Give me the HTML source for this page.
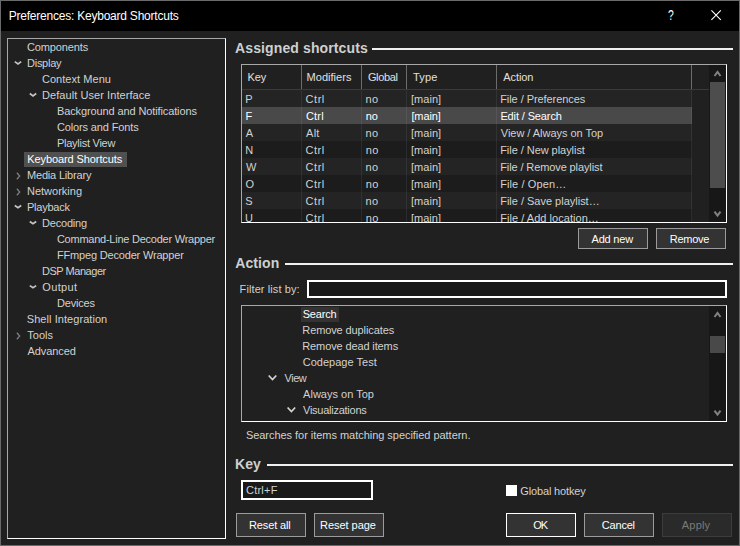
<!DOCTYPE html>
<html><head><meta charset="utf-8"><title>Preferences: Keyboard Shortcuts</title>
<style>
*{box-sizing:border-box;margin:0;padding:0}
html,body{width:740px;height:546px;overflow:hidden;background:#202020}
body{position:relative;font-family:"Liberation Sans",sans-serif;font-size:11px;color:#d6d6d6}
.abs{position:absolute}
.t{position:absolute;white-space:nowrap}
.box{position:absolute;border:1px solid;border-color:#a8a8a8 #fff #fff #a8a8a8}
.edit{position:absolute;border:2px solid #fff;background:#191919}
.hl{position:absolute;height:2px;background:#f0f0f0}
.btn{position:absolute;border:1px solid #9b9b9b;background:#333;color:#fff;text-align:center;white-space:nowrap}
</style></head><body>
<div class="abs" style="left:0;top:0;width:740px;height:546px;border:1px solid #6a6a6a"></div>
<div class="abs" style="left:1px;top:1px;width:738px;height:30px;background:#000"></div>
<svg class="abs" style="left:0;top:0" width="740" height="31"><path d="M711.4 10.4 L720.8 19.8 M720.8 10.4 L711.4 19.8" stroke="#fff" stroke-width="1.1" fill="none"/></svg>
<div class="t" style="left:668.3px;top:7px;line-height:16px;font-size:14px;color:#fff;transform:scaleX(.74);transform-origin:0 0">?</div>
<div class="box" style="left:7px;top:38px;width:219px;height:501px"></div>
<div class="hl" style="left:372px;top:48px;width:361px"></div>
<div class="hl" style="left:285px;top:263px;width:448px"></div>
<div class="hl" style="left:267px;top:464px;width:466px"></div>
<!-- shortcuts list -->
<div class="box" style="left:241px;top:64px;width:486px;height:159px"></div>
<div class="abs" id="lv" style="left:242px;top:65px;width:484px;height:157px;overflow:hidden">
 <div class="abs" style="left:0;top:24px;width:467px;height:1px;background:#3a3a3a"></div>
 <div class="abs" style="left:0;top:25px;width:450px;height:132px;background:#1c1c1c"></div>
 <div class="abs" style="left:0;top:25px;width:450px;height:17px;background:#242424"></div>
 <div class="abs" style="left:0;top:42px;width:450px;height:17px;background:#494949"></div>
 <div class="abs" style="left:0;top:59px;width:450px;height:17px;background:#242424"></div>
 <div class="abs" style="left:0;top:93px;width:450px;height:17px;background:#242424"></div>
 <div class="abs" style="left:0;top:127px;width:450px;height:17px;background:#242424"></div>
 <div class="abs" style="left:59px;top:25px;width:1px;height:132px;background:rgba(255,255,255,.07)"></div>
 <div class="abs" style="left:119px;top:25px;width:1px;height:132px;background:rgba(255,255,255,.07)"></div>
 <div class="abs" style="left:164px;top:25px;width:1px;height:132px;background:rgba(255,255,255,.07)"></div>
 <div class="abs" style="left:254px;top:25px;width:1px;height:132px;background:rgba(255,255,255,.07)"></div>
 <div class="abs" style="left:449px;top:25px;width:1px;height:132px;background:rgba(255,255,255,.07)"></div>
 <div class="abs" style="left:59px;top:0;width:1px;height:24px;background:#6c6c6c"></div>
 <div class="abs" style="left:119px;top:0;width:1px;height:24px;background:#6c6c6c"></div>
 <div class="abs" style="left:164px;top:0;width:1px;height:24px;background:#6c6c6c"></div>
 <div class="abs" style="left:254px;top:0;width:1px;height:24px;background:#6c6c6c"></div>
 <div class="abs" style="left:449px;top:0;width:1px;height:24px;background:#6c6c6c"></div>
 <div class="abs" style="left:467px;top:0;width:17px;height:157px;background:#171717"></div>
 <div class="abs" style="left:468px;top:17px;width:15px;height:106px;background:#4d4d4d"></div>
</div>
<!-- action tree -->
<div class="box" style="left:241px;top:305px;width:486px;height:117px"></div>
<div class="abs" style="left:709px;top:306px;width:17px;height:115px;background:#171717"></div>
<div class="abs" style="left:710px;top:336px;width:15px;height:17px;background:#494949"></div>
<div class="edit" style="left:307px;top:280px;width:420px;height:18px"></div>
<div class="edit" style="left:241px;top:480px;width:132px;height:20px"></div>
<div class="abs" style="left:506px;top:485px;width:11px;height:11px;background:#fff"></div>

<div class="abs" style="left:24px;top:152px;width:103px;height:15px;background:#505050;"></div>
<div class="abs" style="left:301px;top:307px;width:38px;height:15px;background:#333;"></div>
<svg class="abs" style="left:0;top:0" width="740" height="546"><path d="M14.8 61.6 L18.0 63.9 L21.2 61.6" fill="none" stroke="#c4c4c4" stroke-width="1.7"/><path d="M29.8 93.5 L33.0 95.9 L36.2 93.5" fill="none" stroke="#c4c4c4" stroke-width="1.7"/><path d="M16.9 172.8 L19.7 176.0 L16.9 179.2" fill="none" stroke="#7e7e7e" stroke-width="1.3"/><path d="M16.9 188.8 L19.7 192.0 L16.9 195.2" fill="none" stroke="#7e7e7e" stroke-width="1.3"/><path d="M14.8 205.5 L18.0 207.8 L21.2 205.5" fill="none" stroke="#c4c4c4" stroke-width="1.7"/><path d="M29.8 221.5 L33.0 223.8 L36.2 221.5" fill="none" stroke="#c4c4c4" stroke-width="1.7"/><path d="M29.8 285.6 L33.0 287.8 L36.2 285.6" fill="none" stroke="#c4c4c4" stroke-width="1.7"/><path d="M16.9 332.8 L19.7 336.0 L16.9 339.2" fill="none" stroke="#7e7e7e" stroke-width="1.3"/><path d="M268.7 375.5 L272.5 379.6 L276.3 375.5" fill="none" stroke="#d4d4d4" stroke-width="1.7"/><path d="M287.6 407.5 L291.4 411.6 L295.2 407.5" fill="none" stroke="#d4d4d4" stroke-width="1.7"/><path d="M714.5 76.0 L717.5 72.0 L720.5 76.0" fill="none" stroke="#828282" stroke-width="2.0"/><path d="M714.5 211.6 L717.5 215.6 L720.5 211.6" fill="none" stroke="#828282" stroke-width="2.0"/><path d="M714.5 317.0 L717.5 313.0 L720.5 317.0" fill="none" stroke="#828282" stroke-width="2.0"/><path d="M714.5 410.6 L717.5 414.6 L720.5 410.6" fill="none" stroke="#828282" stroke-width="2.0"/></svg>
<div class="btn" style="left:578px;top:228px;width:70px;height:21px;"></div>
<div class="btn" style="left:656px;top:228px;width:70px;height:21px;"></div>
<div class="btn" style="left:236px;top:513px;width:70px;height:24px;"></div>
<div class="btn" style="left:314px;top:513px;width:70px;height:24px;"></div>
<div class="btn" style="left:506px;top:513px;width:70px;height:24px;border-color:#fff;"></div>
<div class="btn" style="left:584px;top:513px;width:70px;height:24px;"></div>
<div class="btn" style="left:662px;top:513px;width:70px;height:24px;color:#7a7a7a;border-color:#3c3c3c;background:#2a2a2a;"></div>
<div class="t" style="left:8.7px;top:8px;line-height:16px;height:16px;color:#fff;letter-spacing:-0.222px;font-size:12px;">Preferences: Keyboard Shortcuts</div>
<div class="t" style="left:26.9px;top:39px;line-height:16px;height:16px;color:#d2d2d2;letter-spacing:-0.106px;">Components</div>
<div class="t" style="left:27.0px;top:55px;line-height:16px;height:16px;color:#d2d2d2;letter-spacing:-0.256px;">Display</div>
<div class="t" style="left:41.9px;top:71px;line-height:16px;height:16px;color:#d2d2d2;letter-spacing:0.054px;">Context Menu</div>
<div class="t" style="left:42.0px;top:87px;line-height:16px;height:16px;color:#d2d2d2;letter-spacing:0.068px;">Default User Interface</div>
<div class="t" style="left:57.0px;top:103px;line-height:16px;height:16px;color:#d2d2d2;letter-spacing:-0.118px;">Background and Notifications</div>
<div class="t" style="left:56.9px;top:119px;line-height:16px;height:16px;color:#d2d2d2;letter-spacing:-0.130px;">Colors and Fonts</div>
<div class="t" style="left:57.0px;top:135px;line-height:16px;height:16px;color:#d2d2d2;letter-spacing:-0.263px;">Playlist View</div>
<div class="t" style="left:27.3px;top:151px;line-height:16px;height:16px;color:#fff;letter-spacing:-0.100px;">Keyboard Shortcuts</div>
<div class="t" style="left:27.0px;top:167px;line-height:16px;height:16px;color:#d2d2d2;letter-spacing:-0.184px;">Media Library</div>
<div class="t" style="left:27.0px;top:183px;line-height:16px;height:16px;color:#d2d2d2;letter-spacing:0.001px;">Networking</div>
<div class="t" style="left:27.0px;top:199px;line-height:16px;height:16px;color:#d2d2d2;letter-spacing:-0.238px;">Playback</div>
<div class="t" style="left:42.0px;top:215px;line-height:16px;height:16px;color:#d2d2d2;letter-spacing:-0.196px;">Decoding</div>
<div class="t" style="left:56.9px;top:231px;line-height:16px;height:16px;color:#d2d2d2;letter-spacing:-0.241px;">Command-Line Decoder Wrapper</div>
<div class="t" style="left:57.0px;top:247px;line-height:16px;height:16px;color:#d2d2d2;letter-spacing:-0.181px;">FFmpeg Decoder Wrapper</div>
<div class="t" style="left:42.0px;top:263px;line-height:16px;height:16px;color:#d2d2d2;letter-spacing:-0.465px;">DSP Manager</div>
<div class="t" style="left:42.3px;top:279px;line-height:16px;height:16px;color:#d2d2d2;letter-spacing:0.342px;">Output</div>
<div class="t" style="left:57.0px;top:295px;line-height:16px;height:16px;color:#d2d2d2;letter-spacing:-0.181px;">Devices</div>
<div class="t" style="left:26.8px;top:311px;line-height:16px;height:16px;color:#d2d2d2;letter-spacing:0.058px;">Shell Integration</div>
<div class="t" style="left:27.3px;top:327px;line-height:16px;height:16px;color:#d2d2d2;letter-spacing:-0.011px;">Tools</div>
<div class="t" style="left:27.6px;top:343px;line-height:16px;height:16px;color:#d2d2d2;letter-spacing:-0.089px;">Advanced</div>
<div class="t" style="left:235.1px;top:39px;line-height:18px;height:18px;color:#cfcfcf;letter-spacing:0.114px;font-size:14px;font-weight:bold;">Assigned shortcuts</div>
<div class="t" style="left:235.3px;top:254px;line-height:18px;height:18px;color:#cfcfcf;letter-spacing:0.068px;font-size:14px;font-weight:bold;">Action</div>
<div class="t" style="left:235.0px;top:455px;line-height:18px;height:18px;color:#cfcfcf;letter-spacing:0.083px;font-size:14px;font-weight:bold;">Key</div>
<div class="t" style="left:247.4px;top:65px;line-height:24px;height:24px;color:#e0e0e0;letter-spacing:-0.017px;">Key</div>
<div class="t" style="left:306.6px;top:65px;line-height:24px;height:24px;color:#e0e0e0;letter-spacing:0.025px;">Modifiers</div>
<div class="t" style="left:367.9px;top:65px;line-height:24px;height:24px;color:#e0e0e0;letter-spacing:-0.330px;">Global</div>
<div class="t" style="left:413.0px;top:65px;line-height:24px;height:24px;color:#e0e0e0;letter-spacing:0.168px;">Type</div>
<div class="t" style="left:503.2px;top:65px;line-height:24px;height:24px;color:#e0e0e0;letter-spacing:-0.065px;">Action</div>
<div class="t" style="left:245.2px;top:91px;line-height:17px;height:17px;color:#d2d2d2;">P</div>
<div class="t" style="left:305.6px;top:91px;line-height:17px;height:17px;color:#d2d2d2;letter-spacing:0.517px;">Ctrl</div>
<div class="t" style="left:365.5px;top:91px;line-height:17px;height:17px;color:#d2d2d2;letter-spacing:0.449px;">no</div>
<div class="t" style="left:411.0px;top:91px;line-height:17px;height:17px;color:#d2d2d2;letter-spacing:0.031px;">[main]</div>
<div class="t" style="left:500.2px;top:91px;line-height:17px;height:17px;color:#d2d2d2;letter-spacing:-0.064px;">File / Preferences</div>
<div class="t" style="left:245.4px;top:108px;line-height:17px;height:17px;color:#fff;">F</div>
<div class="t" style="left:305.9px;top:108px;line-height:17px;height:17px;color:#fff;letter-spacing:0.207px;">Ctrl</div>
<div class="t" style="left:365.8px;top:108px;line-height:17px;height:17px;color:#fff;letter-spacing:-0.140px;">no</div>
<div class="t" style="left:411.4px;top:108px;line-height:17px;height:17px;color:#fff;letter-spacing:-0.109px;">[main]</div>
<div class="t" style="left:500.4px;top:108px;line-height:17px;height:17px;color:#fff;letter-spacing:-0.124px;">Edit / Search</div>
<div class="t" style="left:245.8px;top:125px;line-height:17px;height:17px;color:#d2d2d2;">A</div>
<div class="t" style="left:306.1px;top:125px;line-height:17px;height:17px;color:#d2d2d2;letter-spacing:0.197px;">Alt</div>
<div class="t" style="left:365.5px;top:125px;line-height:17px;height:17px;color:#d2d2d2;letter-spacing:0.449px;">no</div>
<div class="t" style="left:411.0px;top:125px;line-height:17px;height:17px;color:#d2d2d2;letter-spacing:0.031px;">[main]</div>
<div class="t" style="left:500.8px;top:125px;line-height:17px;height:17px;color:#d2d2d2;letter-spacing:-0.029px;">View / Always on Top</div>
<div class="t" style="left:245.2px;top:142px;line-height:17px;height:17px;color:#d2d2d2;">N</div>
<div class="t" style="left:305.5px;top:142px;line-height:17px;height:17px;color:#d2d2d2;letter-spacing:0.544px;">Ctrl</div>
<div class="t" style="left:365.7px;top:142px;line-height:17px;height:17px;color:#d2d2d2;letter-spacing:0.346px;">no</div>
<div class="t" style="left:411.0px;top:142px;line-height:17px;height:17px;color:#d2d2d2;letter-spacing:0.001px;">[main]</div>
<div class="t" style="left:500.2px;top:142px;line-height:17px;height:17px;color:#d2d2d2;letter-spacing:-0.048px;">File / New playlist</div>
<div class="t" style="left:245.9px;top:159px;line-height:17px;height:17px;color:#d2d2d2;">W</div>
<div class="t" style="left:305.6px;top:159px;line-height:17px;height:17px;color:#d2d2d2;letter-spacing:0.517px;">Ctrl</div>
<div class="t" style="left:365.5px;top:159px;line-height:17px;height:17px;color:#d2d2d2;letter-spacing:0.449px;">no</div>
<div class="t" style="left:411.0px;top:159px;line-height:17px;height:17px;color:#d2d2d2;letter-spacing:0.031px;">[main]</div>
<div class="t" style="left:500.2px;top:159px;line-height:17px;height:17px;color:#d2d2d2;letter-spacing:-0.106px;">File / Remove playlist</div>
<div class="t" style="left:245.4px;top:176px;line-height:17px;height:17px;color:#d2d2d2;">O</div>
<div class="t" style="left:305.5px;top:176px;line-height:17px;height:17px;color:#d2d2d2;letter-spacing:0.544px;">Ctrl</div>
<div class="t" style="left:365.7px;top:176px;line-height:17px;height:17px;color:#d2d2d2;letter-spacing:0.346px;">no</div>
<div class="t" style="left:411.0px;top:176px;line-height:17px;height:17px;color:#d2d2d2;letter-spacing:0.001px;">[main]</div>
<div class="t" style="left:500.2px;top:176px;line-height:17px;height:17px;color:#d2d2d2;letter-spacing:0.110px;">File / Open…</div>
<div class="t" style="left:245.2px;top:193px;line-height:17px;height:17px;color:#d2d2d2;">S</div>
<div class="t" style="left:305.6px;top:193px;line-height:17px;height:17px;color:#d2d2d2;letter-spacing:0.517px;">Ctrl</div>
<div class="t" style="left:365.5px;top:193px;line-height:17px;height:17px;color:#d2d2d2;letter-spacing:0.449px;">no</div>
<div class="t" style="left:411.0px;top:193px;line-height:17px;height:17px;color:#d2d2d2;letter-spacing:0.031px;">[main]</div>
<div class="t" style="left:500.2px;top:193px;line-height:17px;height:17px;color:#d2d2d2;letter-spacing:-0.008px;">File / Save playlist…</div>
<div class="t" style="left:245.1px;top:210px;line-height:17px;height:12px;color:#d2d2d2;overflow:hidden;">U</div>
<div class="t" style="left:305.5px;top:210px;line-height:17px;height:12px;color:#d2d2d2;letter-spacing:0.544px;overflow:hidden;">Ctrl</div>
<div class="t" style="left:365.7px;top:210px;line-height:17px;height:12px;color:#d2d2d2;letter-spacing:0.346px;overflow:hidden;">no</div>
<div class="t" style="left:411.0px;top:210px;line-height:17px;height:12px;color:#d2d2d2;letter-spacing:0.001px;overflow:hidden;">[main]</div>
<div class="t" style="left:500.2px;top:210px;line-height:17px;height:12px;color:#d2d2d2;letter-spacing:0.041px;overflow:hidden;">File / Add location…</div>
<div class="t" style="left:239.6px;top:281px;line-height:16px;height:16px;color:#d2d2d2;letter-spacing:0.098px;">Filter list by:</div>
<div class="t" style="left:302.7px;top:306px;line-height:16px;height:16px;color:#fff;letter-spacing:-0.183px;">Search</div>
<div class="t" style="left:302.3px;top:322px;line-height:16px;height:16px;color:#d2d2d2;letter-spacing:-0.105px;">Remove duplicates</div>
<div class="t" style="left:302.3px;top:338px;line-height:16px;height:16px;color:#d2d2d2;letter-spacing:-0.124px;">Remove dead items</div>
<div class="t" style="left:302.7px;top:354px;line-height:16px;height:16px;color:#d2d2d2;letter-spacing:0.023px;">Codepage Test</div>
<div class="t" style="left:284.6px;top:370px;line-height:16px;height:16px;color:#d2d2d2;letter-spacing:-0.481px;">View</div>
<div class="t" style="left:303.1px;top:386px;line-height:16px;height:16px;color:#d2d2d2;letter-spacing:0.010px;">Always on Top</div>
<div class="t" style="left:303.0px;top:402px;line-height:16px;height:16px;color:#d2d2d2;letter-spacing:-0.252px;">Visualizations</div>
<div class="t" style="left:245.9px;top:427px;line-height:16px;height:16px;color:#d2d2d2;letter-spacing:-0.036px;">Searches for items matching specified pattern.</div>
<div class="t" style="left:246.0px;top:482px;line-height:16px;height:16px;color:#d2d2d2;letter-spacing:0.225px;">Ctrl+F</div>
<div class="t" style="left:591.6px;top:228px;line-height:22px;height:22px;color:#fff;letter-spacing:-0.212px;">Add new</div>
<div class="t" style="left:669.7px;top:228px;line-height:22px;height:22px;color:#fff;letter-spacing:-0.251px;">Remove</div>
<div class="t" style="left:249.0px;top:513px;line-height:24px;height:24px;color:#fff;letter-spacing:-0.125px;">Reset all</div>
<div class="t" style="left:320.1px;top:513px;line-height:24px;height:24px;color:#fff;letter-spacing:-0.044px;">Reset page</div>
<div class="t" style="left:533.2px;top:513px;line-height:24px;height:24px;color:#fff;letter-spacing:-0.886px;">OK</div>
<div class="t" style="left:601.8px;top:513px;line-height:24px;height:24px;color:#fff;letter-spacing:-0.197px;">Cancel</div>
<div class="t" style="left:681.8px;top:513px;line-height:24px;height:24px;color:#7a7a7a;letter-spacing:0.200px;">Apply</div>
<div class="t" style="left:520.3px;top:483px;line-height:16px;height:16px;color:#d2d2d2;letter-spacing:-0.148px;">Global hotkey</div>
</body></html>
